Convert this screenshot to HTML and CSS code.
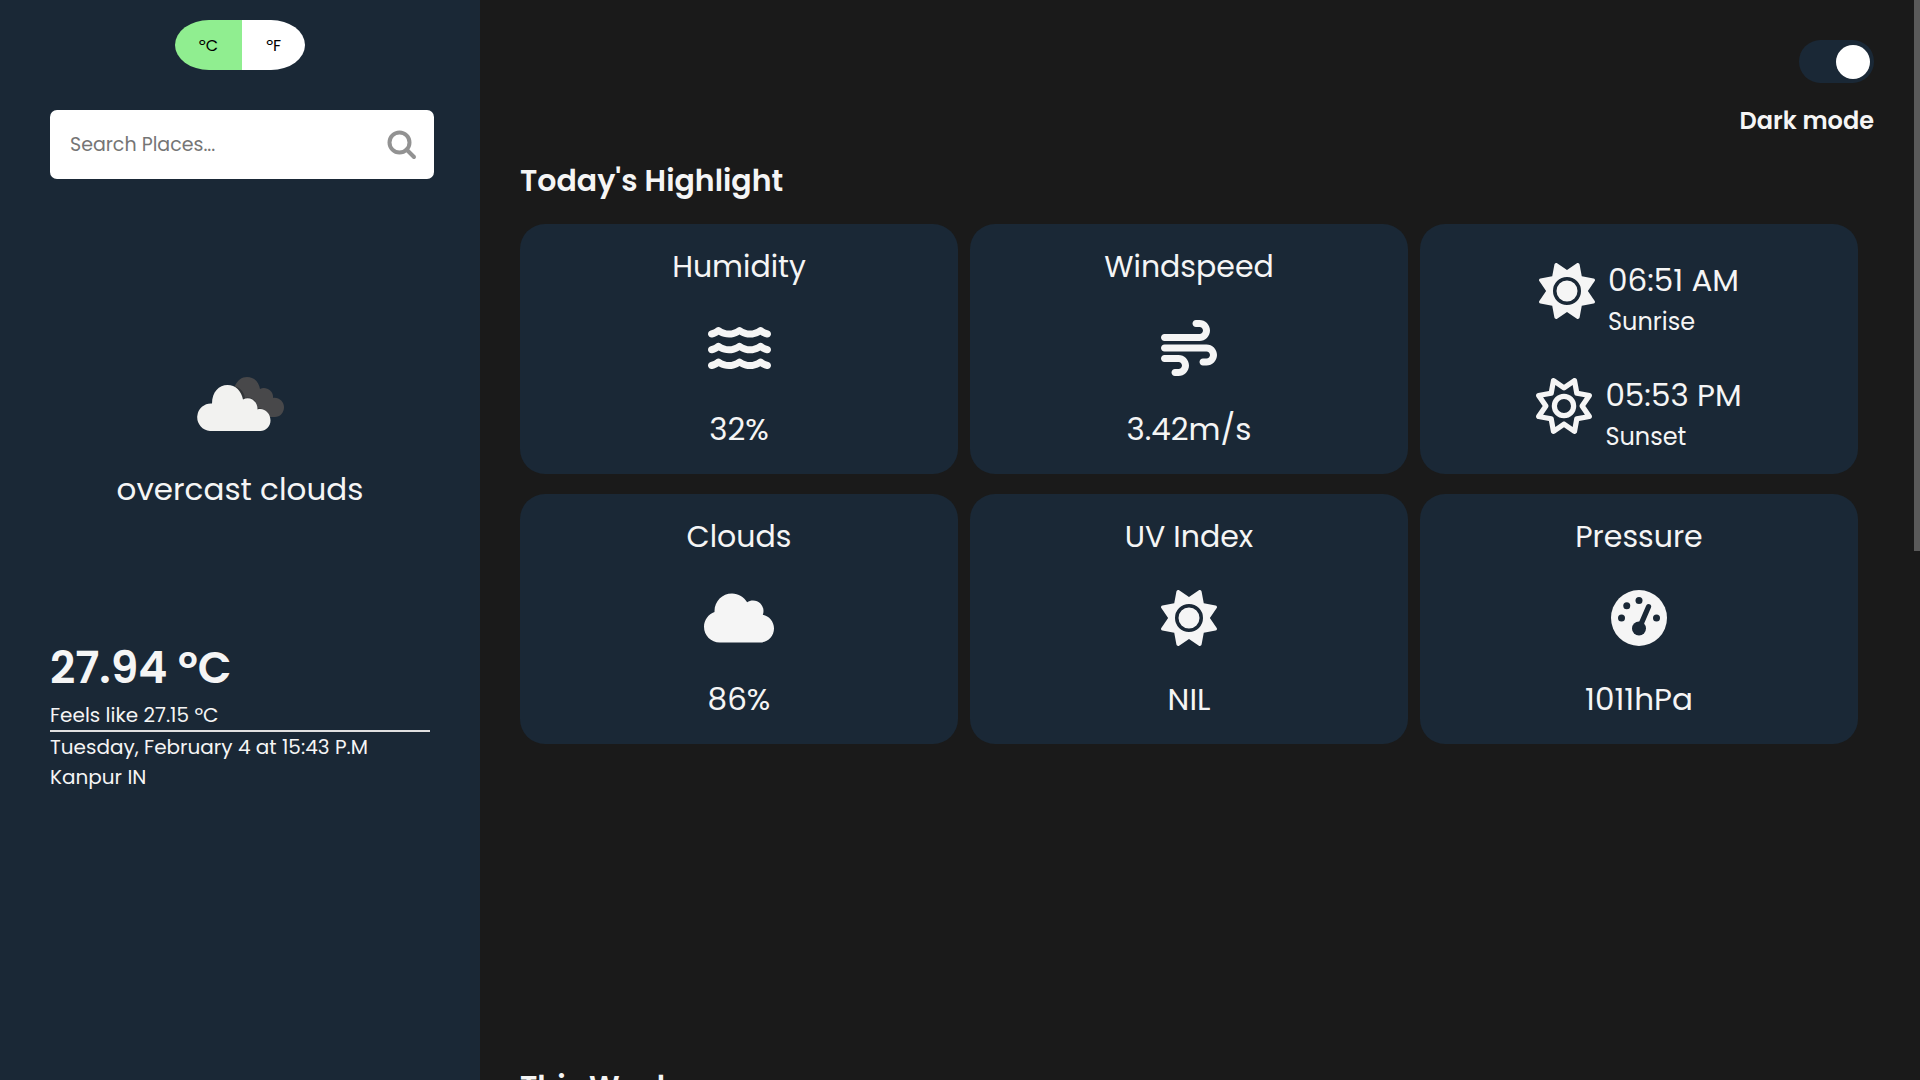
FILE: index.html
```html
<!DOCTYPE html>
<html lang="en">
<head>
<meta charset="utf-8">
<meta name="viewport" content="width=device-width, initial-scale=1">
<title>Weather</title>
<link rel="stylesheet" href="styles.css">
</head>
<body>
<svg class="defs" aria-hidden="true">
  <symbol id="sun" viewBox="0 0 512 512"><path d="M361.5 1.2c5 2.1 8.6 6.6 9.6 11.9L391 121l107.9 19.8c5.3 1 9.8 4.6 11.9 9.6s1.5 10.7-1.6 15.2L446.9 256l62.3 90.3c3.1 4.5 3.7 10.2 1.6 15.2s-6.6 8.6-11.9 9.6L391 391 371.1 498.9c-1 5.3-4.6 9.8-9.6 11.9s-10.7 1.5-15.2-1.6L256 446.9l-90.3 62.3c-4.5 3.1-10.2 3.7-15.2 1.6s-8.6-6.6-9.6-11.9L121 391 13.1 371.1c-5.3-1-9.8-4.6-11.9-9.6s-1.5-10.7 1.6-15.2L65.1 256 2.8 165.7c-3.1-4.5-3.7-10.2-1.6-15.2s6.6-8.6 11.9-9.6L121 121 140.9 13.1c1-5.3 4.6-9.8 9.6-11.9s10.7-1.5 15.2 1.6L256 65.1 346.3 2.8c4.5-3.1 10.2-3.7 15.2-1.6zM160 256a96 96 0 1 1 192 0 96 96 0 1 1 -192 0zm224 0a128 128 0 1 0 -256 0 128 128 0 1 0 256 0z"/></symbol>
</svg>
<div class="app">
  <aside class="sidebar">
    <div class="units">
      <button class="unit unit-active" type="button">ºC</button>
      <button class="unit" type="button">ºF</button>
    </div>
    <form class="search">
      <input class="search-input" type="text" placeholder="Search Places..." aria-label="Search Places">
      <button class="search-button" type="button" aria-label="Search">
        <svg class="search-icon" viewBox="0 0 30 30"><circle cx="12.5" cy="12.5" r="10"/><path d="M19.5 19.5L27 27"/></svg>
      </button>
    </form>
    <div class="condition">
      <svg class="condition-icon" viewBox="-1 0 90 56">
        <path fill="#48484a" d="M38 12C41 4 46 1 51 1c7 0 12 5 13 12 6-3 14 2 13 9 6-1 11 4 11 9 0 6-4 10-9 10H60z"/>
        <path fill="#1b2126" d="M36 10c7 0 12 5 13 12 7-2 13 4 12 10 8 0 13 6 13 12H24V12z" opacity=".5"/>
        <path fill="#f2f2f0" d="M14 55a13.500 13.500 0 0 1 2-27.500C16 16 23 9 31.500 9c8 0 14 6 15.500 14.500 7-4 15 2 14.500 10 7-2 13 4 13 11 0 6-5 10.500-10 10.500z"/>
      </svg>
      <p class="condition-text">overcast clouds</p>
    </div>
    <section class="current">
      <h1 class="temperature">27.94 ºC</h1>
      <p class="detail">Feels like 27.15 ºC</p>
      <hr class="rule">
      <p class="detail">Tuesday, February 4 at 15:43 P.M</p>
      <p class="detail">Kanpur IN</p>
    </section>
  </aside>

  <main class="main">
    <label class="theme">
      <input class="switch" type="checkbox" role="switch" checked>
      <span class="theme-label">Dark mode</span>
    </label>

    <section class="highlights">
      <h2 class="heading">Today's Highlight</h2>
      <div class="cards">
        <article class="card">
          <h3 class="card-title">Humidity</h3>
          <svg class="icon" viewBox="0 0 576 512"><defs><path id="wave" d="M269.5 69.900c11.100-7.900 25.900-7.900 37 0C329 85.400 356.500 96 384 96c26.900 0 55.400-10.800 77.400-26.100c11.900-8.500 28.100-7.800 39.200 1.700c14.400 11.900 32.500 21 50.600 25.200c17.200 4 27.900 21.200 23.900 38.400s-21.200 27.900-38.400 23.900c-24.500-5.700-44.900-16.500-58.200-25C449.500 149.700 417 160 384 160c-31.900 0-60.600-9.900-80.400-18.900c-5.800-2.700-11.100-5.300-15.600-7.700c-4.500 2.400-9.700 5.100-15.600 7.700c-19.800 9-48.500 18.900-80.400 18.900c-33 0-65.500-10.300-94.500-25.800c-13.400 8.400-33.700 19.300-58.200 25c-17.200 4-34.400-6.700-38.400-23.900s6.700-34.400 23.900-38.400C42.800 92.600 61 83.500 75.300 71.600c11.100-9.500 27.300-10.100 39.200-1.700C136.700 85.200 165.100 96 192 96c27.500 0 55-10.600 77.500-26.100z"/></defs><use href="#wave"/><use href="#wave" y="144"/><use href="#wave" y="288"/></svg>
          <p class="card-value">32%</p>
        </article>
        <article class="card">
          <h3 class="card-title">Windspeed</h3>
          <svg class="icon" viewBox="0 0 512 512"><path d="M288 32c0 17.700 14.300 32 32 32l32 0c17.700 0 32 14.300 32 32s-14.300 32-32 32L32 128c-17.700 0-32 14.300-32 32s14.300 32 32 32l320 0c53 0 96-43 96-96s-43-96-96-96L320 0c-17.700 0-32 14.300-32 32zm64 352c0 17.700 14.300 32 32 32l32 0c53 0 96-43 96-96s-43-96-96-96L32 224c-17.700 0-32 14.300-32 32s14.300 32 32 32l384 0c17.700 0 32 14.300 32 32s-14.300 32-32 32l-32 0c-17.700 0-32 14.300-32 32zM128 512l32 0c53 0 96-43 96-96s-43-96-96-96L32 320c-17.700 0-32 14.300-32 32s14.300 32 32 32l128 0c17.700 0 32 14.300 32 32s-14.300 32-32 32l-32 0c-17.700 0-32 14.300-32 32s14.300 32 32 32z"/></svg>
          <p class="card-value">3.42m/s</p>
        </article>
        <article class="card card-sun">
          <div class="sun-row">
            <svg class="icon" viewBox="0 0 512 512"><use href="#sun"/></svg>
            <div>
              <p class="card-value">06:51 AM</p>
              <p class="sun-label">Sunrise</p>
            </div>
          </div>
          <div class="sun-row">
            <svg class="icon" viewBox="0 0 512 512"><path d="M375.700 19.700c-1.500-8-6.900-14.700-14.400-17.800s-16.100-2.200-22.800 2.400L256 61.100 173.500 4.200c-6.700-4.600-15.300-5.500-22.800-2.400s-12.900 9.800-14.400 17.800l-18.100 98.500L19.700 136.300c-8 1.500-14.700 6.900-17.800 14.400s-2.200 16.100 2.400 22.800L61.100 256 4.200 338.500c-4.600 6.700-5.500 15.300-2.400 22.800s9.800 13 17.800 14.400l98.500 18.100 18.100 98.500c1.500 8 6.900 14.700 14.400 17.800s16.100 2.200 22.800-2.400L256 450.900l82.500 56.900c6.700 4.600 15.300 5.500 22.800 2.400s12.900-9.800 14.400-17.800l18.100-98.500 98.500-18.100c8-1.500 14.700-6.900 17.800-14.400s2.200-16.100-2.400-22.800L450.900 256l56.900-82.500c4.600-6.700 5.500-15.300 2.400-22.800s-9.800-12.900-17.800-14.400l-98.500-18.100L375.700 19.700zM269.600 110l65.600-45.200 14.400 78.300c1.800 9.800 9.500 17.500 19.300 19.300l78.300 14.400L402 242.400c-5.700 8.200-5.700 19 0 27.200l45.200 65.600-78.300 14.400c-9.800 1.800-17.500 9.500-19.300 19.300l-14.400 78.300L269.600 402c-8.200-5.700-19-5.700-27.200 0l-65.600 45.200-14.400-78.300c-1.800-9.800-9.500-17.500-19.300-19.300L64.800 335.200 110 269.600c5.700-8.200 5.700-19 0-27.200L64.800 176.800l78.300-14.400c9.800-1.800 17.500-9.500 19.300-19.300l14.400-78.300L242.400 110c8.200 5.700 19 5.700 27.200 0zM256 368a112 112 0 1 0 0-224 112 112 0 1 0 0 224zM192 256a64 64 0 1 1 128 0 64 64 0 1 1 -128 0z"/></svg>
            <div>
              <p class="card-value">05:53 PM</p>
              <p class="sun-label">Sunset</p>
            </div>
          </div>
        </article>
        <article class="card">
          <h3 class="card-title">Clouds</h3>
          <svg class="icon" viewBox="0 0 640 512"><path d="M0 336c0 79.500 64.500 144 144 144l368 0c70.700 0 128-57.300 128-128c0-61.900-44-113.600-102.400-125.400c4.100-10.700 6.400-22.400 6.400-34.600c0-53-43-96-96-96c-19.700 0-38.100 6-53.300 16.200C367 64.200 315.300 32 256 32C167.600 32 96 103.600 96 192c0 2.700 .1 5.400 .2 8.100C40.200 219.800 0 273.200 0 336z"/></svg>
          <p class="card-value">86%</p>
        </article>
        <article class="card">
          <h3 class="card-title">UV Index</h3>
          <svg class="icon" viewBox="0 0 512 512"><use href="#sun"/></svg>
          <p class="card-value">NIL</p>
        </article>
        <article class="card">
          <h3 class="card-title">Pressure</h3>
          <svg class="icon" viewBox="0 0 512 512"><circle cx="256" cy="256" r="256"/><g class="cutout"><circle cx="96" cy="256" r="32"/><circle cx="144" cy="144" r="32"/><circle cx="256" cy="96" r="32"/><circle cx="416" cy="256" r="32"/><circle cx="256" cy="352" r="64"/><path d="M264 336L343 153"/></g></svg>
          <p class="card-value">1011hPa</p>
        </article>
      </div>
    </section>

    <section class="week">
      <h2 class="heading">This Week</h2>
    </section>
  </main>
  <div class="scrollbar" aria-hidden="true"><div class="scrollbar-thumb"></div></div>
</div>
</body>
</html>
```
FILE: styles.css
```css
* {
  box-sizing: border-box;
  margin: 0;
  padding: 0;
}

body {
  background: #1a1a1a;
  color: #f5f5f5;
  font-family: Poppins, Inter, sans-serif;
}

button,
input {
  border: 0;
  font: inherit;
}

.defs {
  display: none;
}

.app {
  display: grid;
  grid-template-columns: 25% 1fr 6px;
  height: 100vh;
  overflow: hidden;
}

/* Sidebar */
.sidebar {
  display: flex;
  flex-direction: column;
  padding: 20px 46px 0 50px;
  background: #1a2836;
}

.units {
  display: flex;
  align-self: center;
  margin-right: 4px;
  border-radius: 34px / 25px;
  overflow: hidden;
}

.unit {
  height: 50px;
  padding: 0 24px;
  background: #fff;
  color: #000;
  font-size: 16px;
}

.unit-active {
  background: #90ee90;
}

.search {
  display: flex;
  align-items: center;
  height: 69px;
  margin-top: 40px;
  padding: 0 17px 0 20px;
  border-radius: 7px;
  background: #fff;
}

.search-input {
  flex: 1;
  min-width: 0;
  background: transparent;
  font-size: 19px;
  outline: 0;
}

.search-input::placeholder {
  color: #757575;
}

.search-button {
  display: flex;
  background: transparent;
}

.search-icon {
  width: 30px;
  height: 30px;
  fill: none;
  stroke: #929292;
  stroke-width: 4;
  stroke-linecap: round;
}

.condition {
  display: flex;
  flex-direction: column;
  align-items: center;
  gap: 33px;
  margin: 197px 4px 0 0;
}

.condition-icon {
  width: 90px;
  height: 56px;
}

.condition-text {
  font-size: 31px;
  line-height: 48px;
}

.current {
  margin: 123px 4px 0 0;
}

.temperature {
  font-size: 44px;
  font-weight: 600;
  line-height: 64px;
}

.detail {
  font-size: 20px;
  line-height: 30px;
}

.rule {
  height: 2px;
  border: 0;
  background: #e0e0e0;
}

/* Main column */
.main {
  min-width: 0;
  padding: 40px 40px 0;
  overflow: hidden;
}

.theme {
  display: flex;
  flex-direction: column;
  align-items: flex-end;
  gap: 20px;
}

.switch {
  display: flex;
  align-items: center;
  justify-content: flex-start;
  width: 75px;
  height: 43px;
  padding: 4px;
  border-radius: 22px;
  background: #1a2836;
  appearance: none;
}

.switch:checked {
  justify-content: flex-end;
}

.switch::before {
  content: "";
  width: 34px;
  height: 34px;
  border-radius: 50%;
  background: #fff;
}

.theme-label {
  font-size: 24px;
  font-weight: 600;
  line-height: 36px;
}

.heading {
  font-size: 30px;
  font-weight: 600;
  line-height: 44px;
}

.highlights {
  margin-top: 20px;
  padding-right: 16px;
}

.cards {
  display: grid;
  grid-template-columns: repeat(3, 1fr);
  gap: 20px 12px;
  margin-top: 21px;
}

.card {
  display: flex;
  flex-direction: column;
  align-items: center;
  gap: 29px;
  min-height: 250px;
  padding: 19px 20px 18px;
  border-radius: 25px;
  background: #1a2836;
}

.card-title,
.card-value {
  font-size: 30px;
  font-weight: 400;
  line-height: 48px;
}

.card-value {
  font-size: 31px;
}

.icon {
  height: 56px;
  fill: #f5f5f5;
}

.cutout {
  fill: #1a2836;
  stroke: #1a2836;
}

.cutout circle {
  stroke: none;
}

.cutout path {
  stroke-width: 48;
  stroke-linecap: round;
}

.card-sun {
  gap: 31px;
  padding-top: 32px;
}

.sun-row {
  display: flex;
  gap: 13px;
}

.sun-row .icon {
  margin-top: 7px;
}

.sun-label {
  font-size: 24px;
  line-height: 36px;
}

.week {
  margin-top: 321px;
}

/* Scroll indicator */
.scrollbar-thumb {
  height: 51%;
  background: #5a5a5a;
}
```
